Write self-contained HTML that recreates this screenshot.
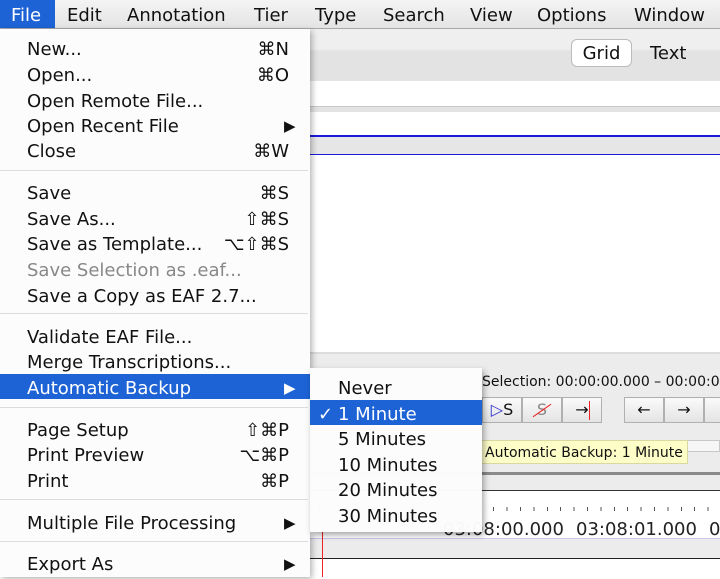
<!DOCTYPE html>
<html><head><meta charset="utf-8"><style>
*{margin:0;padding:0;box-sizing:border-box}
body{width:720px;height:577px;overflow:hidden;position:relative;background:#fff;font-family:"DejaVu Sans","Liberation Sans",sans-serif;color:#111}
.a{position:absolute}
.mb{top:0;left:0;width:720px;height:29px;background:linear-gradient(#f4f4f4,#e4e4e4);border-bottom:1px solid #a8a8a8;font-size:18px}
.mb span{position:absolute;top:5px}
.menu{left:0;top:29px;width:310px;height:548px;background:rgba(252,252,252,0.97);box-shadow:2px 2px 6px rgba(0,0,0,.3);font-size:18px}
.it{position:absolute;left:0;width:310px;height:25px;line-height:29px}
.it .t{position:absolute;left:27px}
.it .k{position:absolute;right:21px}
.it .ar{position:absolute;left:284px;font-size:15px}
.sep{position:absolute;left:0;width:308px;height:1px;background:#dcdcdc}
.hl{background:#1d63d5;color:#fff}
.sub{left:310px;top:368px;width:172px;height:164px;background:rgba(252,252,252,0.98);box-shadow:2px 3px 6px rgba(0,0,0,.35);font-size:18px}
.si{position:absolute;left:0;width:172px;height:25px;line-height:29px}
.si .t{position:absolute;left:28px}
.btn{position:absolute;top:397px;width:40px;height:26px;background:linear-gradient(#fafafa,#e4e4e4);border:1px solid #b0b0b0;font-size:16px;text-align:center;line-height:24px}
</style></head><body>
<div class="a" style="left:310px;top:29px;width:410px;height:52px;background:linear-gradient(#efefef 0,#efefef 20px,#e3e3e3 22px,#e3e3e3 100%)"></div>
<div class="a" style="left:571px;top:39px;width:61px;height:28px;background:#fff;border:1px solid #bbb;border-radius:6px;font-size:18px;line-height:27px;text-align:center">Grid</div>
<div class="a" style="left:650px;top:43px;font-size:18px">Text</div>
<div class="a" style="left:310px;top:106px;width:410px;height:6px;background:#e3e3e3;border-top:1px solid #c8c8c8"></div>
<div class="a" style="left:310px;top:135px;width:410px;height:2px;background:#1a1adf"></div>
<div class="a" style="left:310px;top:137px;width:410px;height:18px;background:#e6e6e6"></div>
<div class="a" style="left:310px;top:154px;width:410px;height:1px;background:#1a1adf"></div>
<div class="a" style="left:310px;top:352px;width:410px;height:140px;background:#ececec;border-top:2px solid #dcdcdc"></div>
<div class="a" style="left:482px;top:374px;font-size:14px;white-space:nowrap">Selection: 00:00:00.000 – 00:00:00</div>
<div class="btn" style="left:482px"><span style="color:#33c">▷</span>S</div>
<div class="btn" style="left:522px;color:#888">S<span class="a" style="left:8px;top:12px;width:22px;height:1px;background:#e22;transform:rotate(-35deg)"></span></div>
<div class="btn" style="left:562px">→<span class="a" style="left:26px;top:3px;width:1px;height:19px;background:#e22"></span></div>
<div class="btn" style="left:624px">←</div>
<div class="btn" style="left:664px">→</div>
<div class="btn" style="left:704px">↓</div>
<div class="a" style="left:482px;top:440px;width:238px;height:12px;background:#f6f6f6;border:1px solid #c8c8c8"></div>
<div class="a" style="left:310px;top:472px;width:410px;height:3px;background:#8a8a8a"></div>
<div class="a" style="left:310px;top:490px;width:410px;height:1px;background:#333"></div>
<div class="a" style="left:310px;top:491px;width:410px;height:47px;background:#fff"></div>
<div class="a" style="left:310px;top:507px;width:410px;height:4px;background:repeating-linear-gradient(90deg,#555 0 1px,transparent 1px 13.4px);background-position:9px 0"></div>
<div class="a" style="left:443px;top:519px;font-size:18px;color:#222">03:08:00.000</div>
<div class="a" style="left:576px;top:519px;font-size:18px;color:#222">03:08:01.000</div>
<div class="a" style="left:709px;top:519px;font-size:18px;color:#222">0</div>
<div class="a" style="left:310px;top:538px;width:410px;height:1px;background:#c8c8f0"></div>
<div class="a" style="left:310px;top:539px;width:410px;height:20px;background:#ececec"></div>
<div class="a" style="left:310px;top:558px;width:410px;height:1px;background:#222"></div>
<div class="a" style="left:322px;top:532px;width:1px;height:45px;background:#e22"></div>
<div class="a" style="left:480px;top:440px;width:208px;height:24px;background:#fdfdc8;border:1px solid #d8d8a0;font-size:14px;line-height:24px;padding-left:4px;white-space:nowrap">Automatic Backup: 1 Minute</div>

<div class="a mb">
<div class="a hl" style="left:0;top:0;width:55px;height:28px"></div>
<span style="left:11px;color:#fff">File</span>
<span style="left:67px">Edit</span>
<span style="left:127px">Annotation</span>
<span style="left:254px">Tier</span>
<span style="left:315px">Type</span>
<span style="left:383px">Search</span>
<span style="left:470px">View</span>
<span style="left:537px">Options</span>
<span style="left:634px">Window</span>
</div>

<div class="a menu">
<div class="it" style="top:6px"><span class="t">New...</span><span class="k">⌘N</span></div>
<div class="it" style="top:32px"><span class="t">Open...</span><span class="k">⌘O</span></div>
<div class="it" style="top:58px"><span class="t">Open Remote File...</span></div>
<div class="it" style="top:83px"><span class="t">Open Recent File</span><span class="ar">▶</span></div>
<div class="it" style="top:108px"><span class="t">Close</span><span class="k">⌘W</span></div>
<div class="sep" style="top:141px"></div>
<div class="it" style="top:150px"><span class="t">Save</span><span class="k">⌘S</span></div>
<div class="it" style="top:176px"><span class="t">Save As...</span><span class="k">⇧⌘S</span></div>
<div class="it" style="top:201px"><span class="t">Save as Template...</span><span class="k">⌥⇧⌘S</span></div>
<div class="it" style="top:227px;color:#888"><span class="t">Save Selection as .eaf...</span></div>
<div class="it" style="top:253px"><span class="t">Save a Copy as EAF 2.7...</span></div>
<div class="sep" style="top:284px"></div>
<div class="it" style="top:294px"><span class="t">Validate EAF File...</span></div>
<div class="it" style="top:319px"><span class="t">Merge Transcriptions...</span></div>
<div class="it hl" style="top:345px"><span class="t">Automatic Backup</span><span class="ar">▶</span></div>
<div class="sep" style="top:378px"></div>
<div class="it" style="top:387px"><span class="t">Page Setup</span><span class="k">⇧⌘P</span></div>
<div class="it" style="top:412px"><span class="t">Print Preview</span><span class="k">⌥⌘P</span></div>
<div class="it" style="top:438px"><span class="t">Print</span><span class="k">⌘P</span></div>
<div class="sep" style="top:470px"></div>
<div class="it" style="top:480px"><span class="t">Multiple File Processing</span><span class="ar">▶</span></div>
<div class="sep" style="top:512px"></div>
<div class="it" style="top:521px"><span class="t">Export As</span><span class="ar">▶</span></div>
</div>

<div class="a sub">
<div class="si" style="top:6px"><span class="t">Never</span></div>
<div class="si hl" style="top:32px"><span class="a" style="left:8px">✓</span><span class="t">1 Minute</span></div>
<div class="si" style="top:57px"><span class="t">5 Minutes</span></div>
<div class="si" style="top:83px"><span class="t">10 Minutes</span></div>
<div class="si" style="top:108px"><span class="t">20 Minutes</span></div>
<div class="si" style="top:134px"><span class="t">30 Minutes</span></div>
</div>
</body></html>
